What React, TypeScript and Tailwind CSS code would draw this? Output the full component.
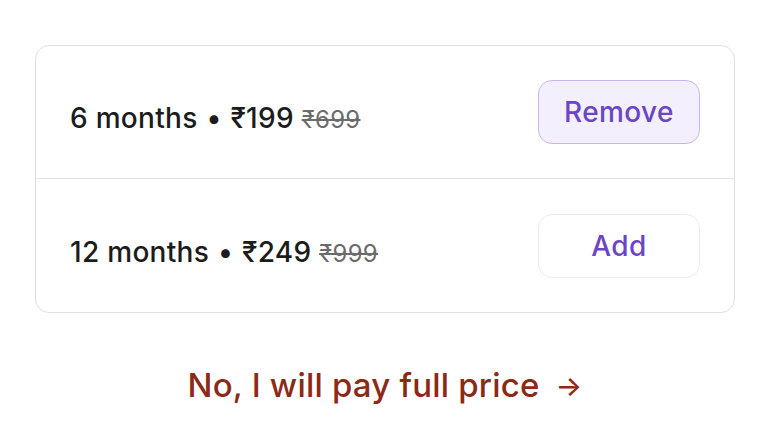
import React from "react";

type Plan = { label: string; price: string; mrp: string; added: boolean };

const plans: Plan[] = [
  { label: "6 months", price: "₹199", mrp: "₹699", added: true },
  { label: "12 months", price: "₹249", mrp: "₹999", added: false },
];

function PlanRow({ plan, last }: { plan: Plan; last: boolean }) {
  return (
    <div
      className={`flex h-[133px] items-center justify-between pl-[34px] pr-[34px] ${
        last ? "" : "border-b border-[#e3e3e3]"
      }`}
    >
      <p className="pt-[12px] text-[28px] font-medium tracking-[0.3px] text-[#1c1c1c]">
        {plan.label} <span className="mx-[1px]">•</span> {plan.price}{" "}
        <span className="text-[24px] font-normal tracking-[0.3px] text-[#6b6b6b] line-through decoration-[1.5px]">
          {plan.mrp}
        </span>
      </p>
      <button
        className={`flex h-[64px] w-[162px] items-center justify-center rounded-[14px] border text-[28px] font-medium tracking-[0.4px] text-[#6a45c6] ${
          plan.added
            ? "border-[#c7b6ec] bg-[#f4effd]"
            : "border-[#ebebeb] bg-white"
        }`}
      >
        {plan.added ? "Remove" : "Add"}
      </button>
    </div>
  );
}

export default function App() {
  return (
    <div className="h-[433px] w-[770px] bg-white font-['Inter',sans-serif] antialiased">
      <div className="px-[35px] pt-[45px]">
        <div className="overflow-hidden rounded-[14px] border border-[#e0e0e0]">
          {plans.map((p, i) => (
            <PlanRow key={p.label} plan={p} last={i === plans.length - 1} />
          ))}
        </div>
      </div>
      <div className="mt-[48px] flex justify-center">
        <button className="flex items-center gap-[16px] text-[33px] font-medium tracking-[0.2px] text-[#8a2a17]">
          No, I will pay full price
          <span className="text-[28px]">→</span>
        </button>
      </div>
    </div>
  );
}
